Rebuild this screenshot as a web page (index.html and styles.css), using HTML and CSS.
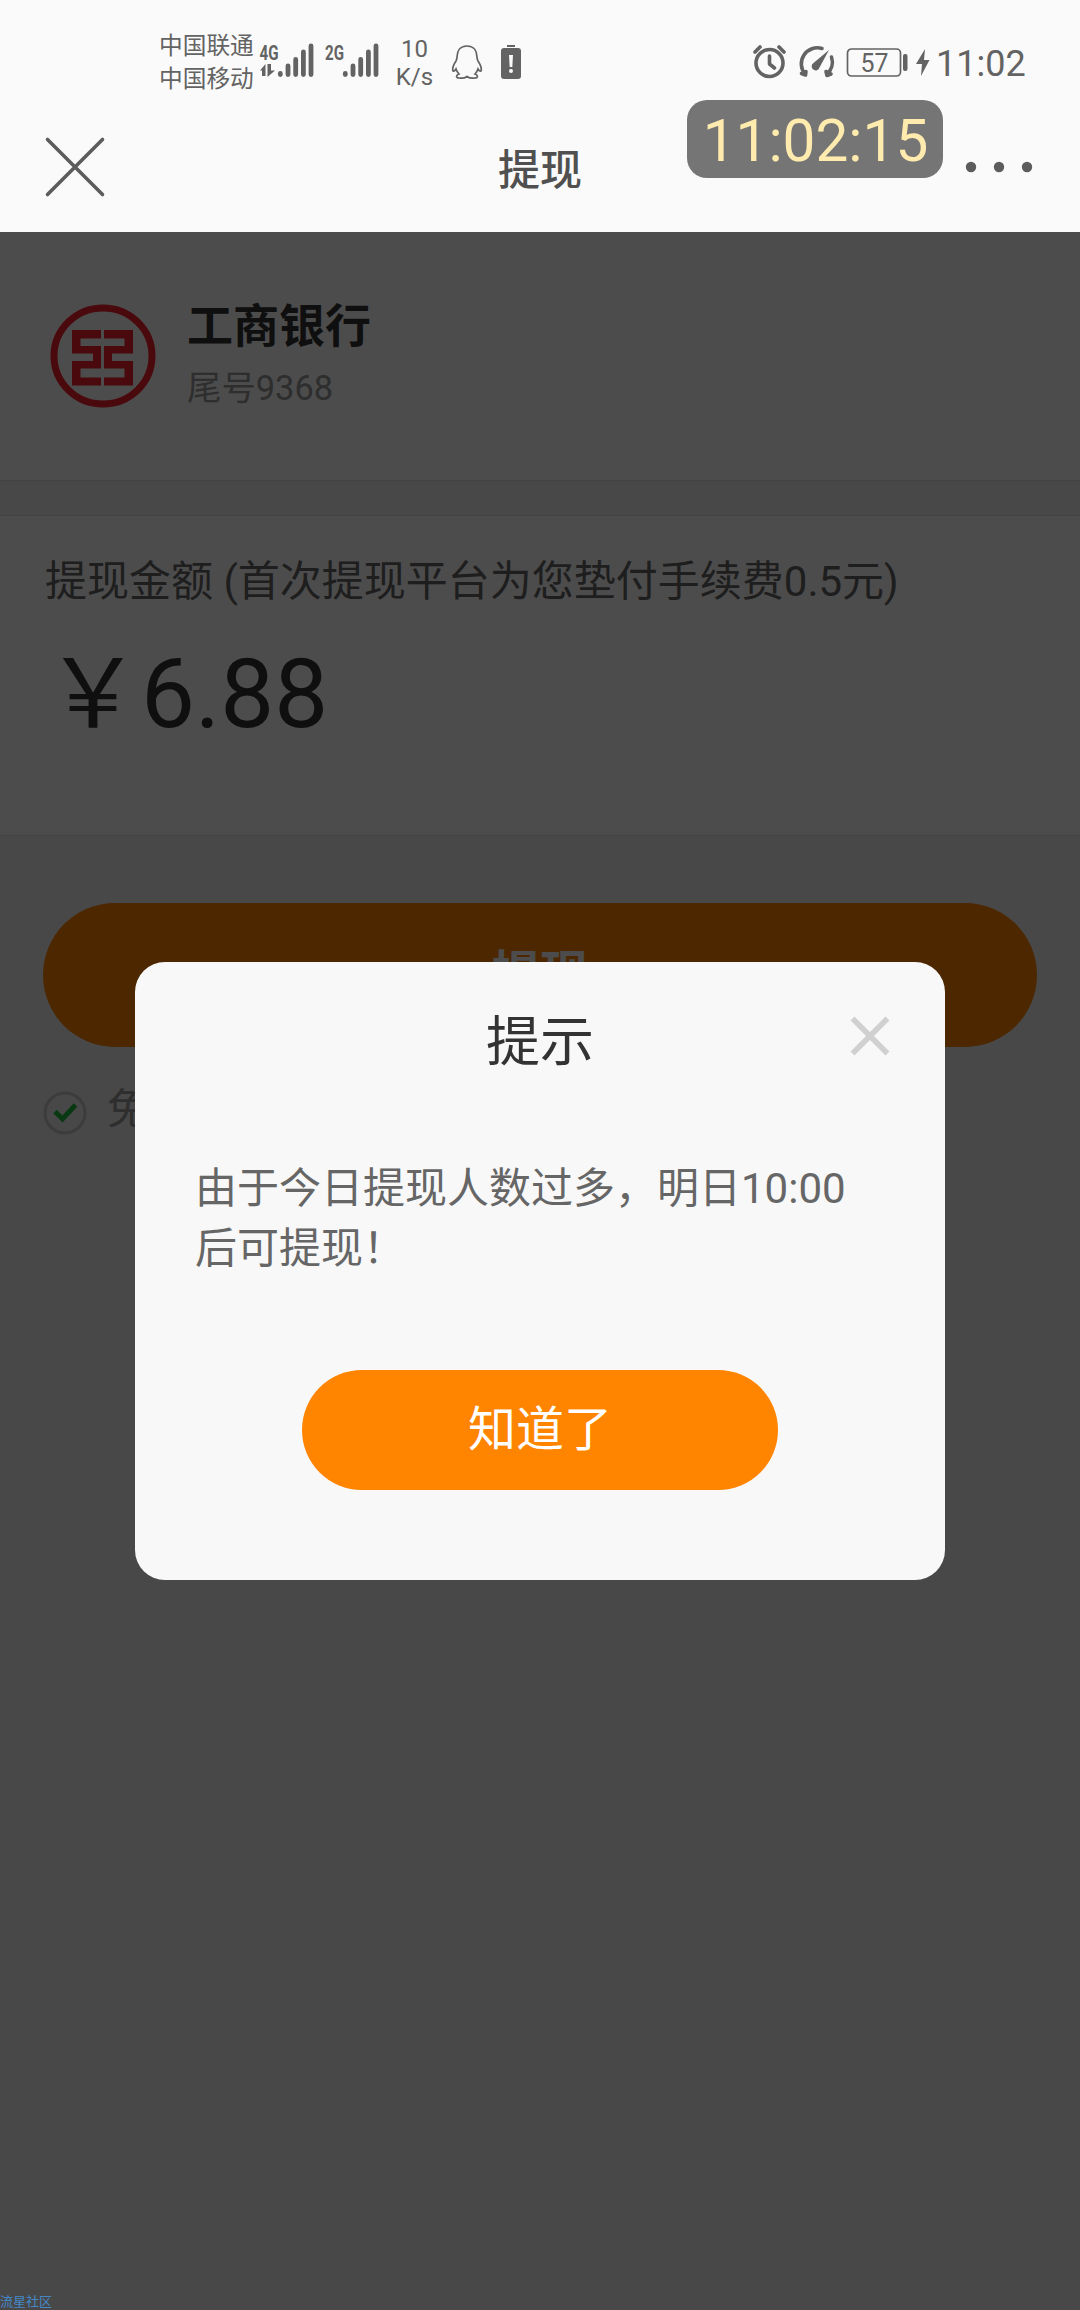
FILE: index.html
```html
<!DOCTYPE html>
<html lang="zh-CN">
<head>
<meta charset="utf-8">
<title>提现</title>
<link rel="stylesheet" href="styles.css">
</head>
<body>
<div class="screen">
  <div class="top">
    <div class="status">
      <div class="carriers"><span>中国联通</span><span>中国移动</span></div>
      <svg class="signals" width="124" height="40" viewBox="0 0 124 40">
        <g class="net">
          <text x="1.500" y="18" textLength="19" lengthAdjust="spacingAndGlyphs">4G</text>
          <text x="67" y="18" textLength="19" lengthAdjust="spacingAndGlyphs">2G</text>
        </g>
        <path class="fill" d="M2 28.500L7.500 22V34H4V28.500ZM9.500 22H13v6.500H17L9.500 35Z"/>
        <path class="bars" d="M22.300 32.500v-1M30 32.500V24M37.700 32.500V17.500M45.400 32.500V10M53 32.500V4M87.300 32.500v-1M95 32.500V24M102.700 32.500V17.500M110.400 32.500V10M118 32.500V4"/>
      </svg>
      <div class="rate"><span>10</span><span>K/s</span></div>
      <svg class="qq" width="32" height="36" viewBox="0 0 32 36">
        <path class="line" d="M16 2C9 2 6 7 6 13C6 15 5.500 16 5 17C3 20 1.500 23 1.700 26C2 28 4 27 5 25C5.600 27 6.600 28.500 8 30C5 31 4.500 34 8 34C11 34.500 14 34 16 32.500C18 34 21 34.500 24 34C27.500 34 27 31 24 30C25.400 28.500 26.400 27 27 25C28 27 30 28 30.300 26C30.500 23 29 20 27 17C26.500 16 26 15 26 13C26 7 23 2 16 2Z"/>
      </svg>
      <svg class="alert" width="20" height="36" viewBox="0 0 20 36">
        <path class="fill" d="M6 1h8v2H6ZM3 4h14a3 3 0 0 1 3 3v25a3 3 0 0 1-3 3H3a3 3 0 0 1-3-3V7a3 3 0 0 1 3-3Z"/>
        <path class="paper" d="M8 11h4l-.7 12H8.700Z"/><circle class="paper" cx="10" cy="27" r="2"/>
      </svg>
      <svg class="right-icons" width="182" height="40" viewBox="0 0 182 40">
        <g class="thick">
          <circle cx="17.500" cy="21" r="13.500"/><path d="M17.500 14V22l5 4M3 10l5-5M27 5l5 5"/>
          <path d="M70 6.500A16 16 0 0 0 53 32M49.500 31.500l4 1.500.5-3.500M79.500 15A16 16 0 0 1 75 32M74 29.500l1 4 4-1.500"/>
        </g>
        <path class="fill" d="M77 8L67.500 25.500A4 4 0 1 1 61.500 21Z"/>
        <rect class="line" x="95.500" y="7" width="53" height="27" rx="4"/>
        <text class="level" x="108.500" y="30" textLength="28" lengthAdjust="spacingAndGlyphs">57</text>
        <rect class="fill" x="151" y="12" width="4.500" height="17" rx="2"/>
        <path class="fill" d="M173 7L164 22h6l-1 12 8.500-16H172Z"/>
      </svg>
      <span class="time">11:02</span>
    </div>
    <div class="nav">
      <svg class="nav-close" width="62" height="62" viewBox="0 0 62 62"><path d="M3.500 3.500L58.500 58.500M58.500 3.500L3.500 58.500"/></svg>
      <h1>提现</h1>
      <svg class="more" width="68" height="12" viewBox="0 0 68 12"><circle cx="6" cy="6" r="5.200"/><circle cx="34" cy="6" r="5.200"/><circle cx="62" cy="6" r="5.200"/></svg>
    </div>
    <div class="clock">11:02:15</div>
  </div>
  <div class="content">
    <section class="bank">
      <svg class="logo" width="106" height="104" viewBox="0 0 106 104">
        <ellipse cx="53" cy="52" rx="49" ry="48"/>
        <path d="M22 26H51V34.500H30.500V42H51V64.500H30.500V73.500H51V81.500H22V57H43V49.500H22ZM83 26H54V34.500H74.500V42H54V64.500H74.500V73.500H54V81.500H83V57H62V49.500H83Z"/>
      </svg>
      <div class="bank-text"><strong>工商银行</strong><span>尾号9368</span></div>
    </section>
    <section class="amount">
      <div class="label">提现金额 (首次提现平台为您垫付手续费0.5元)</div>
      <div class="value">￥6.88</div>
    </section>
    <div class="actions">
      <div class="submit">提现</div>
      <div class="agree">
        <svg width="44" height="44" viewBox="0 0 44 44"><circle cx="22" cy="22" r="20"/><path d="M12 20.500l7.500 7.500 13-14"/></svg>
        <span>免</span>
      </div>
    </div>
    <div class="mask"></div>
  </div>
  <div class="dialog">
    <div class="dialog-title">提示</div>
    <svg class="dialog-close" width="40" height="40" viewBox="0 0 40 40"><path d="M2.500 2.500L37.500 37.500M37.500 2.500L2.500 37.500"/></svg>
    <p>由于今日提现人数过多，明日10:00后可提现！</p>
    <div class="confirm">知道了</div>
  </div>
  <div class="watermark">流星社区</div>
</div>
</body>
</html>
```
FILE: styles.css
```css
* { box-sizing: border-box; }
body { margin: 0; font-family: Roboto, "Noto Sans CJK SC", sans-serif; }
svg { display: block; flex: none; }
.screen { position: relative; width: 1080px; height: 2310px; overflow: hidden; background: #484848; }
.top { position: relative; height: 232px; background: #fafafa; color: #636363; }
.status { display: flex; height: 100px; padding: 0 50px 0 158px; }
.carriers { display: flex; flex-direction: column; width: 100px; padding: 30px 0 0 1px; font-size: 23.700px; line-height: 33px; white-space: nowrap; }
.signals { margin-top: 42px; }
.net { font: 700 21px Roboto, sans-serif; fill: #636363; }
.fill { fill: #636363; }
.paper { fill: #fafafa; }
.line { fill: none; stroke: #636363; stroke-width: 1.700; }
.bars { stroke: #636363; stroke-width: 4.800; stroke-linecap: round; }
.rate { display: flex; flex-direction: column; align-items: center; width: 64px; padding: 35px 0 0 1px; font-size: 24px; line-height: 28px; }
.qq { margin: 44px 0 0 5px; }
.alert { margin: 44px 0 0 18px; }
.right-icons { margin: 42px 0 0 231px; }
.thick { fill: none; stroke: #636363; stroke-width: 3.600; stroke-linecap: round; stroke-linejoin: round; }
.level { font: 26px Roboto, sans-serif; fill: #636363; }
.time { margin-left: 2px; padding-top: 42px; font-size: 36px; line-height: 44px; }
.nav { display: flex; align-items: center; justify-content: space-between; height: 134px; padding: 0 47px 0 44px; }
.nav-close path { fill: none; stroke: #5c5c5c; stroke-width: 3.600; stroke-linecap: round; }
.nav h1 { margin: 7px 0 0 9px; font-size: 42px; font-weight: 500; line-height: 60px; color: #505050; }
.more { fill: #5c5c5c; }
.clock { position: absolute; left: 687px; top: 100px; width: 256px; height: 78px; padding-left: 1px; border-radius: 20px; background: #757575; color: #ffebae; font-size: 58.500px; line-height: 83px; text-align: center; }
.content { position: relative; height: 2078px; background: #f0f0f0; }
.mask { position: absolute; inset: 0; background: rgba(0, 0, 0, .7); }
.bank { display: flex; height: 249px; padding: 71px 50px 0; background: #fff; border-bottom: 1px solid #dcdcdc; }
.logo { margin-top: 1px; }
.logo ellipse { fill: none; stroke: #f81f29; stroke-width: 7; }
.logo path { fill: #f81f29; }
.bank-text { display: flex; flex-direction: column; margin: -10px 0 0 31px; }
.bank-text strong { font-size: 46px; line-height: 66px; color: #333; }
.bank-text span { font-size: 34.400px; line-height: 58px; color: #999; }
.amount { height: 321px; margin-top: 34px; padding: 36px 45px 0; background: #fff; border-top: 1px solid #dcdcdc; border-bottom: 1px solid #dcdcdc; color: #333; }
.label { font-size: 42px; line-height: 60px; color: #666; white-space: nowrap; }
.value { margin-top: 26px; font-size: 96px; line-height: 112px; }
.actions { padding: 67px 43px 0; }
.submit { height: 144px; border-radius: 72px; background: #ff8400; color: #fff; font-size: 48px; font-weight: 700; line-height: 141px; text-align: center; }
.agree { display: flex; align-items: center; height: 60px; margin-top: 31px; font-size: 42px; color: #999; }
.agree svg { margin-top: 10px; }
.agree span { margin: -6px 0 0 20px; }
.agree circle { fill: none; stroke: #c8c8c8; stroke-width: 3; }
.agree path { fill: none; stroke: #20c040; stroke-width: 5; }
.dialog { position: absolute; left: 135px; top: 962px; width: 810px; height: 618px; padding: 42px 60px 0; border-radius: 30px; background: #f8f8f8; }
.dialog-title { font-size: 54px; line-height: 78px; color: #333; text-align: center; }
.dialog-close { position: absolute; left: 715px; top: 54px; }
.dialog-close path { stroke: #d0d0d0; stroke-width: 5.500; }
.dialog p { margin: 77px 0 0; width: 660px; font-size: 42px; line-height: 60px; color: #666; }
.confirm { width: 476px; height: 120px; margin: 91px auto 0; border-radius: 60px; background: #ff8400; color: #fff; font-size: 48px; line-height: 119px; text-align: center; }
.watermark { position: absolute; left: 0; top: 2290px; font-size: 13px; line-height: 20px; padding-top: 3px; height: 20px; color: #4488c8; line-height: 17px; }
```
